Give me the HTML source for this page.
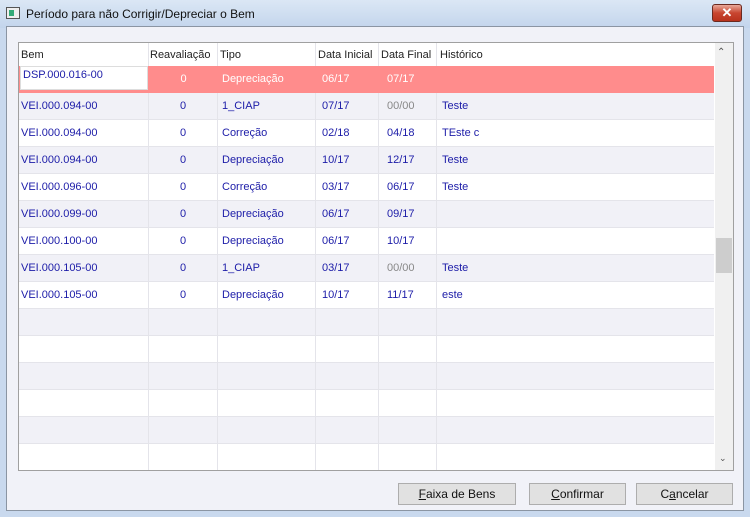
<!DOCTYPE html>
<html><head><meta charset="utf-8"><style>
*{margin:0;padding:0;box-sizing:border-box}
body{width:750px;height:517px;overflow:hidden;font-family:"Liberation Sans",sans-serif;font-size:11px;background:#c9d9ee;position:relative}
.title{position:absolute;left:0;top:0;width:750px;height:28px;background:linear-gradient(#dbe7f5,#c3d5ec)}
.title span{position:absolute;left:26px;top:7px;font-size:12px;color:#111}
.ico{position:absolute;left:6px;top:7px;width:14px;height:12px;border:1px solid #555;background:#eee}
.ico:after{content:"";position:absolute;left:2px;top:2px;width:5px;height:6px;background:#3a7}
.close{position:absolute;left:712px;top:4px;width:30px;height:18px;border:1px solid #6b2a20;border-radius:3px;background:linear-gradient(#e9a99a,#c8452f 50%,#b8321d);color:#fff;font-size:13px;font-weight:bold;text-align:center;line-height:16px}
.client{position:absolute;left:6px;top:26px;width:738px;height:485px;background:#f1f2f8;border:1px solid #8b95a3}
.grid{position:absolute;left:18px;top:42px;width:716px;height:429px;border:1px solid #a0a0a0;background:#fff;overflow:hidden}
.row{position:absolute;left:0;width:695px;height:27px;border-bottom:1px solid #e4e4ea}
.g{background:#f1f1f7}
.c{position:absolute;top:0;height:27px;line-height:27px;color:#1c1ca8;white-space:nowrap;border-right:1px solid #e4e4ea}
.hdr .c{color:#222;line-height:24px;height:24px}
.sb{position:absolute;left:696px;top:0;width:18px;height:427px;background:#f0f0f0}
.btn{position:absolute;top:483px;height:22px;border:1px solid #adadad;background:#e1e1e1;text-align:center;line-height:20px;font-size:12px;color:#111}
</style></head><body>
<div class="title"><div class="ico"></div><span>Período para não Corrigir/Depreciar o Bem</span><div class="close">✕</div></div>
<div class="client"></div>
<div class="grid">
<div class="row hdr" style="top:0;height:23px;border-bottom:none">
<div class="c" style="left:0;width:130px;padding-left:2px">Bem</div>
<div class="c" style="left:130px;width:69px;padding-left:1px">Reavaliação</div>
<div class="c" style="left:199px;width:98px;padding-left:2px">Tipo</div>
<div class="c" style="left:297px;width:63px;padding-left:2px">Data Inicial</div>
<div class="c" style="left:360px;width:58px;padding-left:2px">Data Final</div>
<div class="c" style="left:418px;width:277px;padding-left:3px;border:none">Histórico</div>
</div>
<div class="row" style="top:23px;background:#ff8c8c;border:none">
<div class="c" style="left:1px;width:128px;height:24px;background:#fff;line-height:16px;padding-left:2px;border:1px solid #ddd">DSP.000.016-00</div>
<div class="c" style="left:130px;width:69px;text-align:center;color:#fff;border:none">0</div>
<div class="c" style="left:199px;width:98px;padding-left:4px;color:#fff;border:none">Depreciação</div>
<div class="c" style="left:297px;width:63px;padding-left:6px;color:#fff;border:none">06/17</div>
<div class="c" style="left:360px;width:58px;padding-left:8px;color:#fff;border:none">07/17</div>
</div>
<div id="rows"></div>
<div class="sb"><div style="position:absolute;left:2px;top:4px;font-size:10px;color:#555">⌃</div><div style="position:absolute;left:1px;top:195px;width:16px;height:35px;background:#cdcdcd"></div><div style="position:absolute;left:4px;top:410px;font-size:9px;color:#555">⌄</div></div>
</div>
<div class="btn" style="left:398px;width:118px"><u>F</u>aixa de Bens</div>
<div class="btn" style="left:529px;width:97px"><u>C</u>onfirmar</div>
<div class="btn" style="left:636px;width:97px">C<u>a</u>ncelar</div>
<script>
var d=[["VEI.000.094-00","1_CIAP","07/17","00/00","Teste"],["VEI.000.094-00","Correção","02/18","04/18","TEste c"],["VEI.000.094-00","Depreciação","10/17","12/17","Teste"],["VEI.000.096-00","Correção","03/17","06/17","Teste"],["VEI.000.099-00","Depreciação","06/17","09/17",""],["VEI.000.100-00","Depreciação","06/17","10/17",""],["VEI.000.105-00","1_CIAP","03/17","00/00","Teste"],["VEI.000.105-00","Depreciação","10/17","11/17","este"]];
var h="";
for(var i=0;i<14;i++){var r=d[i];var t=50+i*27;h+='<div class="row'+(i%2==0?' g':'')+'" style="top:'+t+'px">';
h+='<div class="c" style="left:0;width:130px;padding-left:2px">'+(r?r[0]:'')+'</div>';
h+='<div class="c" style="left:130px;width:69px;text-align:center">'+(r?'0':'')+'</div>';
h+='<div class="c" style="left:199px;width:98px;padding-left:4px">'+(r?r[1]:'')+'</div>';
h+='<div class="c" style="left:297px;width:63px;padding-left:6px">'+(r?r[2]:'')+'</div>';
h+='<div class="c" style="left:360px;width:58px;padding-left:8px;'+(r&&r[3]=="00/00"?'color:#888':'')+'">'+(r?r[3]:'')+'</div>';
h+='<div class="c" style="left:418px;width:277px;padding-left:5px;border:none">'+(r?r[4]:'')+'</div></div>';}
document.getElementById("rows").innerHTML=h;
</script>
</body></html>
